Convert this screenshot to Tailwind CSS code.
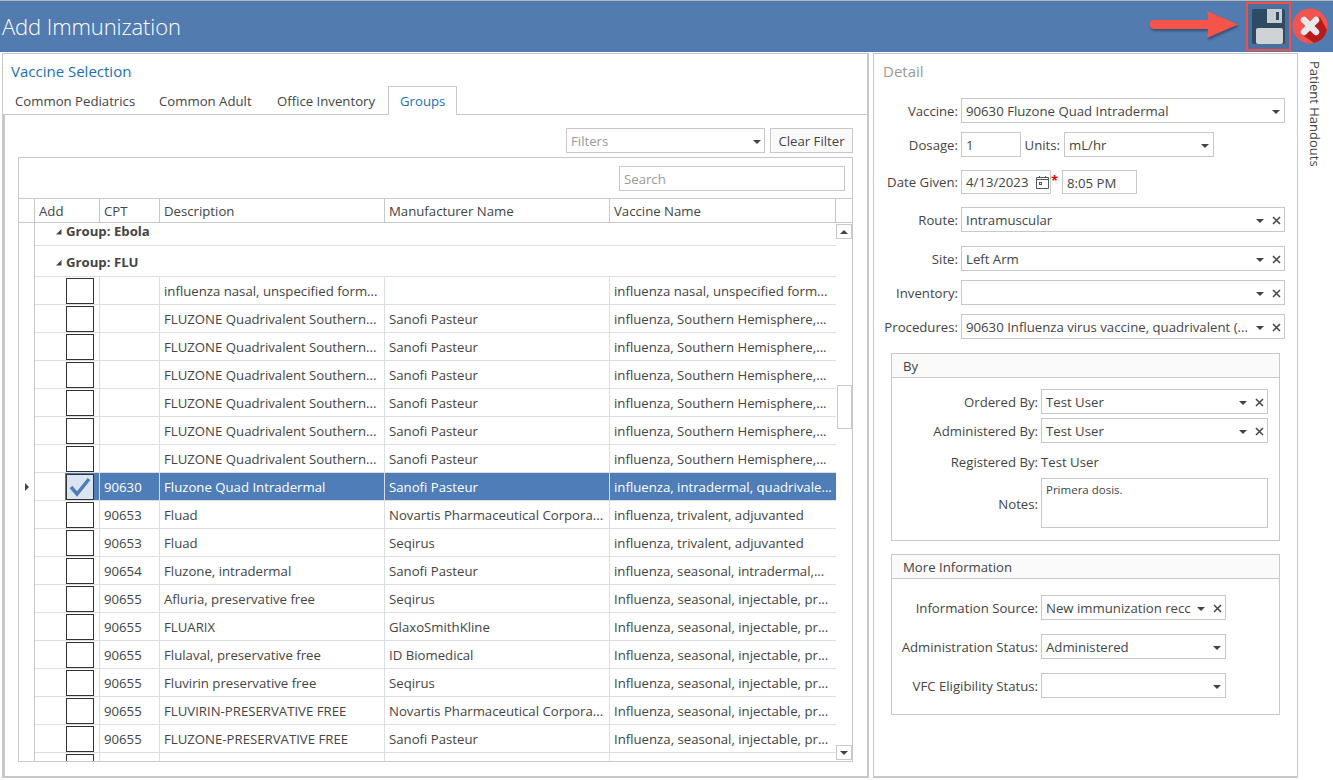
<!DOCTYPE html>
<html lang="en">
<head>
    <meta charset="UTF-8">
    <title>Add Immunization</title>
    <script src="https://cdn.jsdelivr.net/npm/@tailwindcss/browser@4"></script>
</head>
<body class="bg-white">
<div class="w-[1333px] h-[780px] overflow-hidden flex flex-col bg-white text-[#444] text-[13.2px] font-['Open_Sans',sans-serif]">

    <!-- Title bar -->
    <header class="h-[52px] shrink-0 border-t border-[#b5b5b5] bg-[#527bb0] flex items-center">
        <h1 class="ml-[2px] text-[22px] font-light text-white tracking-[-0.1px] whitespace-nowrap">Add Immunization</h1>
        <svg class="ml-auto mb-[3px] w-[90px] h-[30px] drop-shadow-[1px_2px_1px_rgba(0,0,0,0.35)]" viewBox="0 0 90 30">
            <path d="M5 10H59L58 1L89 14.500L58 28L59 19H5A4.500 4.500 0 0 1 5 10Z" fill="#f4544a"/>
        </svg>
        <div class="ml-[7px] w-[45px] h-[49px] border-2 border-[#ee5147] flex items-center justify-center bg-[#4a70a0]">
            <svg class="w-[33px] h-[35px]" viewBox="0 0 33 35">
                <rect width="33" height="35" rx="2" fill="#2f4a63"/>
                <rect x="15" y="0" width="15" height="14" fill="#c9cdd0"/>
                <rect x="24" y="3" width="3" height="8" fill="#2f4a63"/>
                <rect x="4" y="19" width="27" height="16" rx="2" fill="#d0d3d5"/>
            </svg>
        </div>
        <svg class="ml-[1px] mr-[5px] mb-px w-[36px] h-[36px]" viewBox="0 0 36 36">
            <circle cx="18" cy="18" r="17.500" fill="#f4544f"/>
            <path d="M28 9L35 22A17.500 17.500 0 0 1 22 35L9 26Z" fill="#b71c1c"/>
            <path d="M12 12L24 24M24 12L12 24" stroke="#e9e9e9" stroke-width="6.500" stroke-linecap="round"/>
        </svg>
    </header>

    <div class="flex h-[728px] pt-px">
        <!-- Vaccine selection -->
        <section class="ml-[2px] w-[867px] h-[725px] border border-[#c8c8c8] border-b-2 border-r-2 bg-white flex flex-col">
            <h2 class="h-[32px] pl-[8px] pt-[7px] text-[15px] leading-[20px] text-[#1a6fb5]">Vaccine Selection</h2>
            <div class="h-[29px] flex shrink-0 border-b border-[#c8c8c8]">
                <div class="w-[144px] pl-[12px] leading-[31px]">Common Pediatrics</div>
                <div class="w-[118px] pl-[12px] leading-[31px]">Common Adult</div>
                <div class="w-[123px] pl-[12px] leading-[31px]">Office Inventory</div>
                <div class="w-[69px] h-[29px] pl-[11px] leading-[29px] text-[#1a6fb5] border border-b-0 border-[#c8c8c8] bg-white">Groups</div>
            </div>
            <div class="flex-1 border-l-2 border-[#c8c8c8] flex flex-col">
                <div class="h-[42px] shrink-0 pt-[13px] flex justify-end pr-[14px] gap-[5px]">
                    <div class="w-[199px] h-[25px] border border-[#c8c8c8] flex items-center pl-[4px] pr-[3px] pt-[2px] text-[#999]">
                        Filters
                        <span class="ml-auto w-0 h-0 border-x-[4px] border-t-[4px] border-x-transparent border-t-[#444]"></span>
                    </div>
                    <div class="w-[83px] h-[25px] border border-[#c8c8c8] bg-[#fafafa] text-center leading-[25px]">Clear Filter</div>
                </div>

                <!-- Grid -->
                <div class="w-[835px] h-[605px] ml-[13px] border border-[#c8c8c8] flex flex-col overflow-hidden">
                    <div class="h-[40px] shrink-0 flex justify-end items-start pr-[7px] pt-[8px]">
                        <div class="w-[226px] h-[25px] border border-[#c8c8c8] pl-[4px] leading-[25px] text-[#999]">Search</div>
                    </div>
                    <div class="h-[25px] shrink-0 flex border-y border-[#c8c8c8] leading-[24px] bg-white">
                        <div class="w-[16px] border-r border-[#c8c8c8]"></div>
                        <div class="w-[65px] pl-[4px] border-r border-[#c8c8c8]">Add</div>
                        <div class="w-[60px] pl-[4px] border-r border-[#c8c8c8]">CPT</div>
                        <div class="w-[225px] pl-[4px] border-r border-[#c8c8c8]">Description</div>
                        <div class="w-[225px] pl-[4px] border-r border-[#c8c8c8]">Manufacturer Name</div>
                        <div class="w-[226px] pl-[4px] border-r border-[#c8c8c8]">Vaccine Name</div>
                    </div>
                    <div class="flex-1 min-h-0 flex overflow-hidden">
                        <div id="grid-body" class="w-[817px] shrink-0"></div>
                        <!-- Scrollbar -->
                        <div class="w-[17px] flex flex-col items-center">
                            <div class="mt-px w-[16px] h-[15px] border border-[#c8c8c8] flex items-center justify-center">
                                <span class="w-0 h-0 border-x-[4px] border-b-[4px] border-x-transparent border-b-[#444]"></span>
                            </div>
                            <div class="mt-[146px] w-[15px] h-[44px] border border-[#c8c8c8]"></div>
                            <div class="mt-auto mb-px w-[16px] h-[15px] border border-[#c8c8c8] flex items-center justify-center">
                                <span class="w-0 h-0 border-x-[4px] border-t-[4px] border-x-transparent border-t-[#444]"></span>
                            </div>
                        </div>
                    </div>
                </div>
            </div>
        </section>

        <!-- Detail -->
        <section class="ml-[4px] w-[425px] h-[725px] border border-[#c8c8c8] border-b-2 shrink-0">
            <h2 class="h-[44px] pl-[9px] pt-[7px] text-[15px] leading-[20px] text-[#999]">Detail</h2>

            <div class="h-[25px] flex items-center">
                <label class="w-[87px] mt-[2px] text-right pr-[3px]">Vaccine:</label>
                <div class="w-[324px] h-[25px] border border-[#c8c8c8] flex items-center pl-[4px] pr-[4px] pt-[2px]">
                    90630 Fluzone Quad Intradermal
                    <span class="ml-auto w-0 h-0 border-x-[4px] border-t-[4px] border-x-transparent border-t-[#444]"></span>
                </div>
            </div>
            <div class="mt-[9px] h-[25px] flex items-center">
                <label class="w-[87px] mt-[2px] text-right pr-[3px]">Dosage:</label>
                <div class="w-[60px] h-[25px] border border-[#c8c8c8] pl-[4px] leading-[25px]">1</div>
                <label class="w-[43px] mt-[2px] text-right pr-[4px]">Units:</label>
                <div class="w-[150px] h-[25px] border border-[#c8c8c8] flex items-center pl-[4px] pr-[4px] pt-[2px]">
                    mL/hr
                    <span class="ml-auto w-0 h-0 border-x-[4px] border-t-[4px] border-x-transparent border-t-[#444]"></span>
                </div>
            </div>
            <div class="mt-[13px] h-[24px] flex items-center">
                <label class="w-[87px] mt-[2px] text-right pr-[3px] whitespace-nowrap">Date Given:</label>
                <div class="w-[90px] h-[24px] border border-[#c8c8c8] flex items-center pl-[4px] pr-[1px] pt-[2px]">
                    4/13/2023
                    <svg class="ml-auto -mt-[2px] w-[13px] h-[13px]" viewBox="0 0 13 13" fill="none" stroke="#555">
                        <path d="M0.500 1.500H12.500V12.500H0.500ZM0.500 3.500H12.500M3.500 0V1.500M9.500 0V1.500"/>
                        <rect x="3.500" y="6.500" width="2" height="2"/>
                    </svg>
                </div>
                <span class="w-[11px] -mt-[2px] text-[#e00] font-bold leading-none">*</span>
                <div class="w-[75px] h-[24px] border border-[#c8c8c8] pl-[4px] leading-[24px]">8:05 PM</div>
            </div>
            <div class="mt-[13px] h-[25px] flex items-center">
                <label class="w-[87px] mt-[2px] text-right pr-[3px]">Route:</label>
                <div class="w-[324px] h-[25px] border border-[#c8c8c8] flex items-center pl-[4px] pr-[3px] pt-[2px]">
                    Intramuscular
                    <span class="ml-auto w-0 h-0 border-x-[4px] border-t-[4px] border-x-transparent border-t-[#444]"></span>
                    <svg class="ml-[8px] w-[9px] h-[9px]" viewBox="0 0 9 9" stroke="#444" stroke-width="1.500"><path d="M1 1L8 8M8 1L1 8"/></svg>
                </div>
            </div>
            <div class="mt-[14px] h-[25px] flex items-center">
                <label class="w-[87px] mt-[2px] text-right pr-[3px]">Site:</label>
                <div class="w-[324px] h-[25px] border border-[#c8c8c8] flex items-center pl-[4px] pr-[3px] pt-[2px]">
                    Left Arm
                    <span class="ml-auto w-0 h-0 border-x-[4px] border-t-[4px] border-x-transparent border-t-[#444]"></span>
                    <svg class="ml-[8px] w-[9px] h-[9px]" viewBox="0 0 9 9" stroke="#444" stroke-width="1.500"><path d="M1 1L8 8M8 1L1 8"/></svg>
                </div>
            </div>
            <div class="mt-[9px] h-[25px] flex items-center">
                <label class="w-[87px] mt-[2px] text-right pr-[3px]">Inventory:</label>
                <div class="w-[324px] h-[25px] border border-[#c8c8c8] flex items-center pl-[4px] pr-[3px] pt-[2px]">
                    <span class="ml-auto w-0 h-0 border-x-[4px] border-t-[4px] border-x-transparent border-t-[#444]"></span>
                    <svg class="ml-[8px] w-[9px] h-[9px]" viewBox="0 0 9 9" stroke="#444" stroke-width="1.500"><path d="M1 1L8 8M8 1L1 8"/></svg>
                </div>
            </div>
            <div class="mt-[9px] h-[25px] flex items-center">
                <label class="w-[87px] mt-[2px] text-right pr-[3px]">Procedures:</label>
                <div class="w-[324px] h-[25px] border border-[#c8c8c8] flex items-center pl-[4px] pr-[3px] pt-[2px] whitespace-nowrap">
                    90630 Influenza virus vaccine, quadrivalent (...
                    <span class="ml-auto w-0 h-0 border-x-[4px] border-t-[4px] border-x-transparent border-t-[#444]"></span>
                    <svg class="ml-[8px] w-[9px] h-[9px]" viewBox="0 0 9 9" stroke="#444" stroke-width="1.500"><path d="M1 1L8 8M8 1L1 8"/></svg>
                </div>
            </div>

            <!-- By -->
            <div class="mt-[14px] ml-[17px] w-[389px] h-[188px] border border-[#c8c8c8]">
                <div class="h-[24px] pl-[11px] leading-[24px] bg-[#fafafa] border-b border-[#c8c8c8]">By</div>
                <div class="mt-[11px] h-[25px] flex items-center">
                    <label class="w-[149px] mt-[2px] text-right pr-[3px]">Ordered By:</label>
                    <div class="w-[227px] h-[25px] border border-[#c8c8c8] flex items-center pl-[4px] pr-[3px] pt-[2px]">
                        Test User
                        <span class="ml-auto w-0 h-0 border-x-[4px] border-t-[4px] border-x-transparent border-t-[#444]"></span>
                        <svg class="ml-[8px] w-[9px] h-[9px]" viewBox="0 0 9 9" stroke="#444" stroke-width="1.500"><path d="M1 1L8 8M8 1L1 8"/></svg>
                    </div>
                </div>
                <div class="mt-[4px] h-[25px] flex items-center">
                    <label class="w-[149px] mt-[2px] text-right pr-[3px] whitespace-nowrap">Administered By:</label>
                    <div class="w-[227px] h-[25px] border border-[#c8c8c8] flex items-center pl-[4px] pr-[3px] pt-[2px]">
                        Test User
                        <span class="ml-auto w-0 h-0 border-x-[4px] border-t-[4px] border-x-transparent border-t-[#444]"></span>
                        <svg class="ml-[8px] w-[9px] h-[9px]" viewBox="0 0 9 9" stroke="#444" stroke-width="1.500"><path d="M1 1L8 8M8 1L1 8"/></svg>
                    </div>
                </div>
                <div class="mt-[7px] h-[25px] flex items-center">
                    <label class="w-[149px] text-right pr-[3px] whitespace-nowrap">Registered By:</label>
                    <span>Test User</span>
                </div>
                <div class="mt-[3px] h-[50px] flex items-center">
                    <label class="w-[149px] text-right pr-[3px] mt-[3px]">Notes:</label>
                    <div class="w-[227px] h-[50px] border border-[#c8c8c8] pl-[4px] pt-[3px] text-[11.500px] leading-[16px]">Primera dosis.</div>
                </div>
            </div>

            <!-- More Information -->
            <div class="mt-[13px] ml-[17px] w-[389px] h-[161px] border border-[#c8c8c8]">
                <div class="h-[24px] pl-[11px] leading-[24px] bg-[#fafafa] border-b border-[#c8c8c8]">More Information</div>
                <div class="mt-[16px] h-[25px] flex items-center">
                    <label class="w-[149px] mt-[2px] text-right pr-[3px] whitespace-nowrap">Information Source:</label>
                    <div class="w-[185px] h-[25px] border border-[#c8c8c8] flex items-center pl-[4px] pr-[3px] pt-[2px] whitespace-nowrap">
                        New immunization recc
                        <span class="ml-auto w-0 h-0 border-x-[4px] border-t-[4px] border-x-transparent border-t-[#444]"></span>
                        <svg class="ml-[8px] w-[9px] h-[9px]" viewBox="0 0 9 9" stroke="#444" stroke-width="1.500"><path d="M1 1L8 8M8 1L1 8"/></svg>
                    </div>
                </div>
                <div class="mt-[14px] h-[25px] flex items-center">
                    <label class="w-[149px] mt-[2px] text-right pr-[3px] whitespace-nowrap">Administration Status:</label>
                    <div class="w-[185px] h-[25px] border border-[#c8c8c8] flex items-center pl-[4px] pr-[4px] pt-[2px]">
                        Administered
                        <span class="ml-auto w-0 h-0 border-x-[4px] border-t-[4px] border-x-transparent border-t-[#444]"></span>
                    </div>
                </div>
                <div class="mt-[14px] h-[25px] flex items-center">
                    <label class="w-[149px] mt-[2px] text-right pr-[3px] whitespace-nowrap">VFC Eligibility Status:</label>
                    <div class="w-[185px] h-[25px] border border-[#c8c8c8] flex items-center pl-[4px] pr-[4px] pt-[2px]">
                        <span class="ml-auto w-0 h-0 border-x-[4px] border-t-[4px] border-x-transparent border-t-[#444]"></span>
                    </div>
                </div>
            </div>
        </section>

        <!-- Patient Handouts rail -->
        <aside class="flex-1 pt-[8px] pl-[7px]">
            <div class="[writing-mode:vertical-rl] text-[13px] leading-[20px] whitespace-nowrap">Patient Handouts</div>
        </aside>
    </div>
</div>

<script>
    // Description, manufacturer and vaccine text for each row of the FLU group
    const south = "FLUZONE Quadrivalent Southern...";
    const southVaccine = "influenza, Southern Hemisphere,...";
    const inject = "Influenza, seasonal, injectable, pr...";
    const rows = [
        ["", "influenza nasal, unspecified form...", "", "influenza nasal, unspecified form..."],
        ["", south, "Sanofi Pasteur", southVaccine],
        ["", south, "Sanofi Pasteur", southVaccine],
        ["", south, "Sanofi Pasteur", southVaccine],
        ["", south, "Sanofi Pasteur", southVaccine],
        ["", south, "Sanofi Pasteur", southVaccine],
        ["", south, "Sanofi Pasteur", southVaccine],
        ["90630", "Fluzone Quad Intradermal", "Sanofi Pasteur", "influenza, intradermal, quadrivale..."],
        ["90653", "Fluad", "Novartis Pharmaceutical Corpora...", "influenza, trivalent, adjuvanted"],
        ["90653", "Fluad", "Seqirus", "influenza, trivalent, adjuvanted"],
        ["90654", "Fluzone, intradermal", "Sanofi Pasteur", "influenza, seasonal, intradermal,..."],
        ["90655", "Afluria, preservative free", "Seqirus", inject],
        ["90655", "FLUARIX", "GlaxoSmithKline", inject],
        ["90655", "Flulaval, preservative free", "ID Biomedical", inject],
        ["90655", "Fluvirin preservative free", "Seqirus", inject],
        ["90655", "FLUVIRIN-PRESERVATIVE FREE", "Novartis Pharmaceutical Corpora...", inject],
        ["90655", "FLUZONE-PRESERVATIVE FREE", "Sanofi Pasteur", inject],
        ["", "", "", ""]
    ];

    const groupRow = (name, height) => `
        <div class="flex" style="height:${height}px">
            <div class="w-[16px] border-r border-[#c8c8c8]"></div>
            <div class="flex-1 border-b border-[#dedede] flex items-end pb-[6px] pl-[20px] font-bold leading-[16px] text-[#444]">
                <svg class="w-[7px] h-[7px] mr-[4px] mb-[4px]" viewBox="0 0 7 7"><path d="M6.500 1V6.500H1Z" fill="#444"/></svg>${name}
            </div>
        </div>`;

    const cell = "h-full pl-[4px] leading-[29px] whitespace-nowrap overflow-hidden border-r border-[#d9dfe8]";

    function dataRow(row, selected) {
        const box = selected
            ? `<div class="w-[28px] h-[26px] border border-[#333] bg-[#dbe5f2] flex items-center justify-center">
                   <svg class="w-[22px] h-[20px]" viewBox="0 0 22 20" fill="none" stroke="#4f7db8" stroke-width="3.500"><path d="M2 10L8 17L20 2"/></svg>
               </div>`
            : `<div class="w-[28px] h-[26px] border border-[#333] bg-white"></div>`;
        const tone = selected ? "bg-[#4f7db8] text-white" : "";
        return `
        <div class="h-[28px] flex">
            <div class="w-[16px] border-r border-[#c8c8c8] flex items-center justify-center">
                ${selected ? '<span class="w-0 h-0 border-y-[4px] border-l-[4px] border-y-transparent border-l-[#444]"></span>' : ''}
            </div>
            <div class="flex-1 flex border-b border-[#dedede]">
                <div class="w-[30px] shrink-0"></div>
                <div class="flex-1 flex ${tone}">
                    <div class="w-[35px] pl-px pt-px border-r border-[#d9dfe8]">${box}</div>
                    <div class="w-[60px] ${cell}">${row[0]}</div>
                    <div class="w-[225px] ${cell}">${row[1]}</div>
                    <div class="w-[225px] ${cell}">${row[2]}</div>
                    <div class="flex-1 pl-[4px] leading-[29px] whitespace-nowrap overflow-hidden">${row[3]}</div>
                </div>
            </div>
        </div>`;
    }

    document.getElementById("grid-body").innerHTML =
        groupRow("Group: Ebola", 23) + groupRow("Group: FLU", 31) +
        rows.map((row, i) => dataRow(row, i === 7)).join("");
</script>
</body>
</html>
